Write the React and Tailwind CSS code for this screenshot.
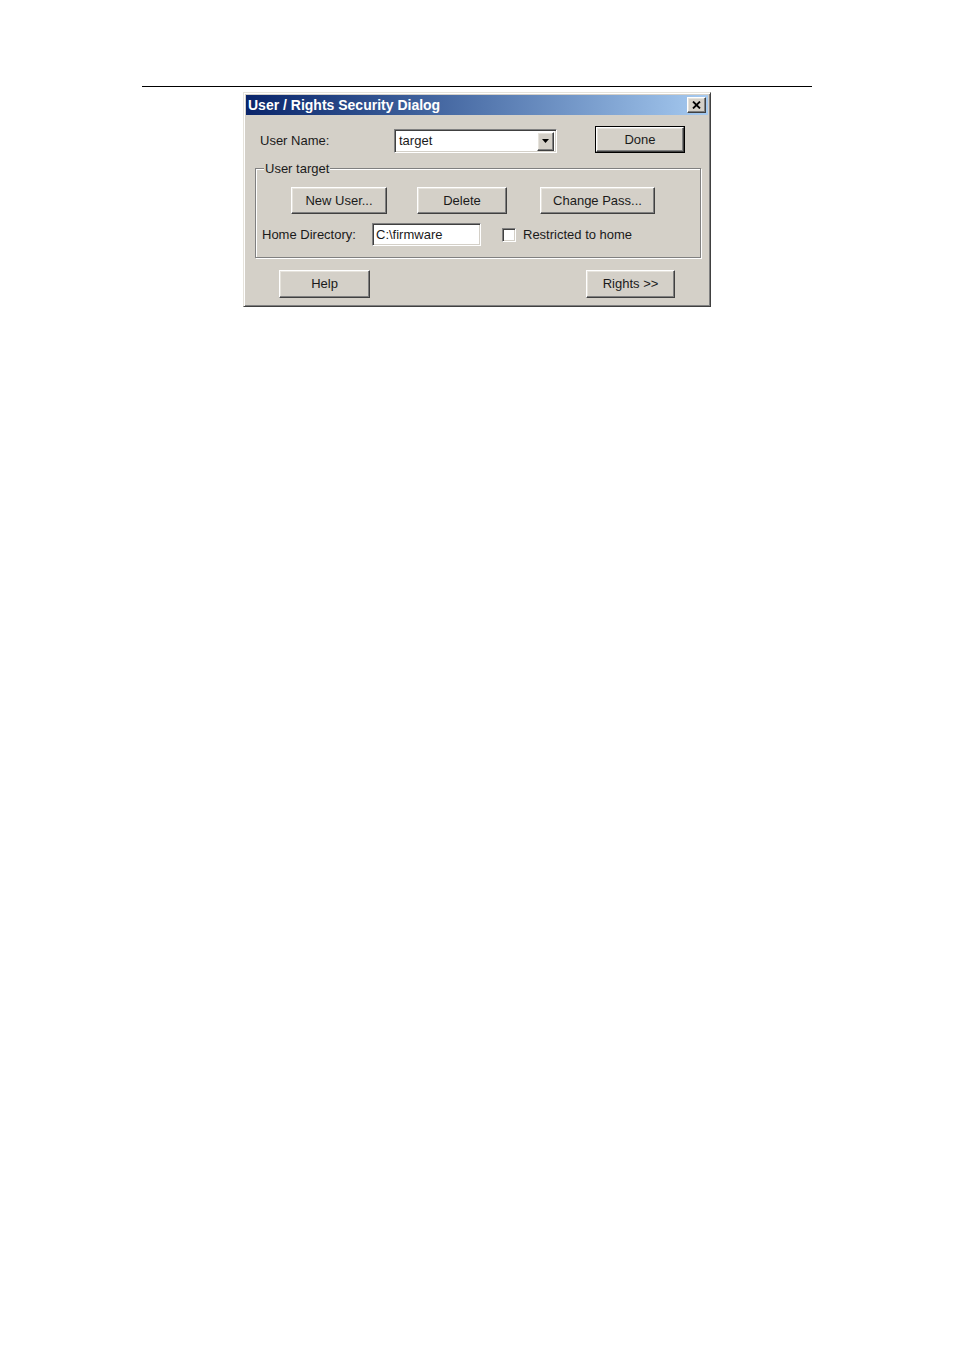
const FONT = { fontFamily: '"Liberation Sans", Arial, sans-serif' };

const raised =
  "border border-t-white border-l-white border-b-[#404040] border-r-[#404040] shadow-[inset_-1px_-1px_0_#808080,inset_1px_1px_0_#e6e3dc] bg-[#d4d0c8]";
const sunken =
  "border border-t-[#808080] border-l-[#808080] border-b-white border-r-white shadow-[inset_1px_1px_0_#404040,inset_-1px_-1px_0_#d4d0c8] bg-white";

function WinButton({ children, className = "" }) {
  return (
    <button
      className={`${raised} flex items-center justify-center text-[13px] text-[#1a1a1a] ${className}`}
    >
      {children}
    </button>
  );
}

export default function App() {
  return (
    <div className="min-h-[1350px] w-[954px] bg-white" style={FONT}>
      {/* rule at top of page */}
      <div className="pt-[86px] pl-[142px]">
        <div className="w-[670px] h-px bg-black" />
      </div>

      {/* dialog */}
      <div className="ml-[243px] mt-[5px] w-[468px] h-[215px] border border-t-[#e6e3dc] border-l-[#e6e3dc] border-b-[#404040] border-r-[#404040] bg-[#d4d0c8] shadow-[inset_1px_1px_0_#fff,inset_-1px_-1px_0_#808080] p-[2px] flex flex-col">
        {/* title bar */}
        <div className="h-[20px] flex items-center justify-between bg-gradient-to-r from-[#0a246a] to-[#a6caf0] pl-[2px] pr-[2px]">
          <span className="text-white font-bold text-[14px]">
            User / Rights Security Dialog
          </span>
          <div className={`${raised} w-[19px] h-[16px] flex items-center justify-center`}>
            <svg width="9" height="8" viewBox="0 0 9 8">
              <path d="M1 0.5 L8 7.5 M8 0.5 L1 7.5" stroke="#000" strokeWidth="1.8" />
            </svg>
          </div>
        </div>

        {/* user name row */}
        <div className="mt-[11px] h-[27px] flex items-start">
          <div className="mt-[3px] h-[24px] flex items-center">
            <span className="ml-[14px] w-[134px] text-[13px] text-[#1a1a1a]">User Name:</span>
            <div className={`${sunken} w-[163px] h-[24px] flex items-center justify-between pl-[4px] pr-[2px]`}>
              <span className="text-[13px] text-[#1a1a1a]">target</span>
              <div className={`${raised} w-[17px] h-[19px] flex items-center justify-center`}>
                <svg width="7" height="4" viewBox="0 0 7 4">
                  <path d="M0 0 H7 L3.5 4 Z" fill="#000" />
                </svg>
              </div>
            </div>
          </div>
          <div className="ml-[38px] border border-black">
            <WinButton className="w-[88px] h-[25px]">Done</WinButton>
          </div>
        </div>

        {/* group box */}
        <div className="relative mt-[15px] ml-[9px] w-[446px] h-[90px] border border-[#808080] shadow-[inset_1px_1px_0_#fff,1px_1px_0_#fff]">
          <span className="absolute -top-[8px] left-[8px] px-[1px] bg-[#d4d0c8] text-[13px] leading-[16px] text-[#1a1a1a]">
            User target
          </span>

          <div className="mt-[18px] ml-[35px] flex">
            <WinButton className="w-[96px] h-[27px]">New User...</WinButton>
            <WinButton className="ml-[30px] w-[90px] h-[27px]">Delete</WinButton>
            <WinButton className="ml-[33px] w-[115px] h-[27px]">Change Pass...</WinButton>
          </div>

          <div className="mt-[9px] flex items-center h-[23px]">
            <span className="ml-[6px] w-[110px] text-[13px] text-[#1a1a1a]">Home Directory:</span>
            <div className={`${sunken} w-[109px] h-[23px] flex items-center pl-[3px]`}>
              <span className="text-[13px] text-[#1a1a1a]">C:\firmware</span>
            </div>
            <div className={`${sunken} ml-[21px] w-[14px] h-[14px]`} />
            <span className="ml-[7px] text-[13px] text-[#1a1a1a]">Restricted to home</span>
          </div>
        </div>

        {/* bottom buttons */}
        <div className="mt-[12px] flex">
          <WinButton className="ml-[33px] w-[91px] h-[28px]">Help</WinButton>
          <WinButton className="ml-[216px] w-[89px] h-[28px]">Rights &gt;&gt;</WinButton>
        </div>
      </div>
    </div>
  );
}
